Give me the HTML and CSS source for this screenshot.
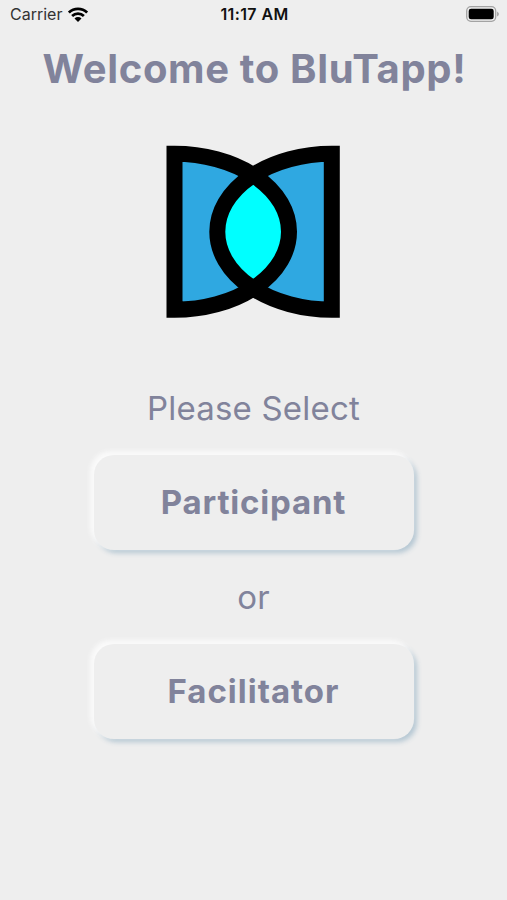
FILE: index.html
```html
<!DOCTYPE html>
<html lang="en">
<head>
<meta charset="utf-8">
<title>BluTapp</title>
<link rel="stylesheet" href="styles.css">
</head>
<body>
<header class="status">
  <div class="carrier"><span>Carrier</span>
    <svg class="wifi" width="20" height="15" viewBox="0 0 20 15"><g fill="none" stroke="#000" stroke-width="2.7"><path d="M.9 5.6a13 13 0 0 1 18.2 0"/><path d="M4.1 9a8.4 8.4 0 0 1 11.8 0"/></g><path d="M6.5 11.4a5 5 0 0 1 7 0L10 14.9Z"/></svg>
  </div>
  <time class="time">11:17 AM</time>
  <svg class="battery" width="33" height="16" viewBox="0 0 33 16"><rect x=".7" y=".7" width="29" height="14.6" rx="4.2" fill="none" stroke="#a3a3a3" stroke-width="1.3"/><rect x="2.7" y="2.7" width="25" height="10.6" rx="2.4"/><path d="M31.2 5.5q1.6 1 1.6 2.5t-1.6 2.5Z" fill="#999"/></svg>
</header>
<main class="welcome">
  <h1 class="title">Welcome to BluTapp!</h1>
  <svg class="logo" width="175" height="174" viewBox="0 0 175 174">
    <g fill="#2fa8e1"><path d="M8.5 8.8A114.5 78 0 0 1 8.5 164.8Z"/><path d="M165.8 8.8A114.5 78 0 0 0 165.8 164.8Z"/></g>
    <path fill="#0ff" d="M87.1 29.8A114.5 78 0 0 1 87.1 143.8A114.5 78 0 0 1 87.1 29.8Z"/>
    <g fill="none" stroke="#000" stroke-width="16"><path d="M8.5 8.8A114.5 78 0 0 1 8.5 164.8Z"/><path d="M165.8 8.8A114.5 78 0 0 0 165.8 164.8Z"/></g>
  </svg>
  <p class="prompt select">Please Select</p>
  <button class="choice participant">Participant</button>
  <p class="prompt or">or</p>
  <button class="choice facilitator">Facilitator</button>
</main>
</body>
</html>
```
FILE: styles.css
```css
* { box-sizing: border-box; }
body {
  margin: 0;
  height: 900px;
  overflow: hidden;
  background: #eeeeee;
  color: #81839b;
  font-family: Inter, "Liberation Sans", sans-serif;
}
.status {
  display: grid;
  grid-template-columns: 1fr auto 1fr;
  align-items: center;
  height: 28px;
  padding: 0 8px 0 10px;
  color: #111;
  font-size: 16px;
}
.carrier { display: flex; align-items: center; gap: 6px; color: #333; }
.time { font-weight: 600; color: #111; letter-spacing: 0.4px; }
.battery { justify-self: end; }
.welcome { display: flex; flex-direction: column; align-items: center; }
.title {
  margin: 16px 0 0;
  height: 50px;
  line-height: 50px;
  font-size: 40px;
  font-weight: 700;
  letter-spacing: 0.65px;
  padding-left: 2px;
  white-space: nowrap;
}
.logo { display: block; margin-top: 51px; }
.prompt { margin: 0; height: 40px; line-height: 40px; font-size: 33px; letter-spacing: 0.2px; }
.select { margin-top: 69px; }
.choice {
  width: 320px;
  height: 95px;
  padding: 0;
  border: 0;
  border-radius: 20px;
  background: #eeeeee;
  color: inherit;
  font: 700 33px/95px Inter, "Liberation Sans", sans-serif;
  letter-spacing: 0.8px;
  box-shadow: -3px -3px 4px 1px #fafafa, 3px 3px 5px #b5c7d3;
}
.participant { margin-top: 27px; }
.or { margin-top: 27px; }
.facilitator { margin-top: 27px; letter-spacing: 1px; }
```
